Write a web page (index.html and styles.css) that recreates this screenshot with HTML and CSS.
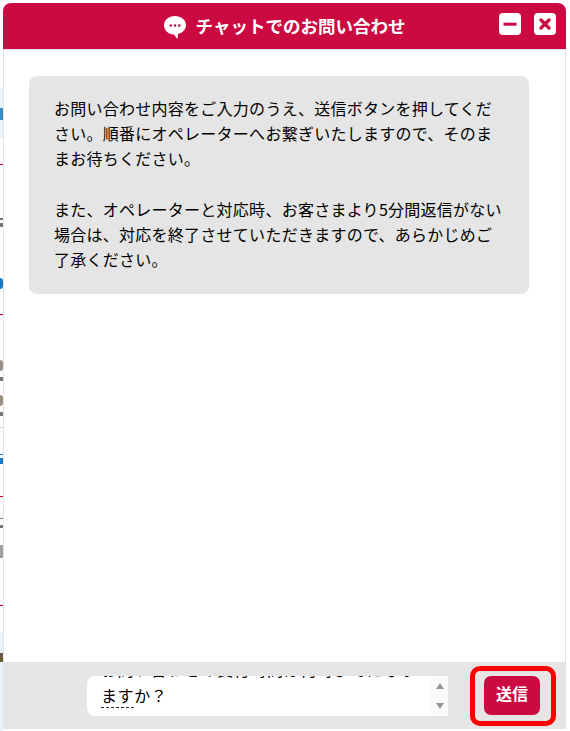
FILE: index.html
```html
<!DOCTYPE html>
<html lang="ja">
<head>
<meta charset="utf-8">
<title>チャットでのお問い合わせ</title>
<link rel="stylesheet" href="styles.css">
</head>
<body>
<div class="backdrop" aria-hidden="true">
  <div class="bg bg-band1"></div>
  <div class="bg bg-glyph1"></div>
  <div class="bg bg-red r1"></div>
  <div class="bg bg-grey g1"></div>
  <div class="bg bg-grey g2"></div>
  <div class="bg bg-blue b1"></div>
  <div class="bg bg-red r2"></div>
  <div class="bg bg-brown br1"></div>
  <div class="bg bg-grey g3"></div>
  <div class="bg bg-brown br2"></div>
  <div class="bg bg-grey g4"></div>
  <div class="bg bg-pale p1"></div>
  <div class="bg bg-blue b2"></div>
  <div class="bg bg-blue b3"></div>
  <div class="bg bg-red r3"></div>
  <div class="bg bg-grey g5"></div>
  <div class="bg bg-grey g6"></div>
  <div class="bg bg-grey g7"></div>
  <div class="bg bg-red r4"></div>
  <div class="bg bg-band2"></div>
  <div class="bg bg-grey g8"></div>
</div>
<main class="window">
  <header class="titlebar">
    <div class="title">
      <svg class="title-icon" viewBox="0 0 22 23"><path fill="#fff" d="M11 0C4.900 0 0 4 0 9.300c0 5 4.300 8.900 9.900 9.300l2.900 3.700c.4.500 1 .3 1-.3v-3.800C18.500 17 22 13.500 22 9.300 22 4 17.100 0 11 0z"/><circle cx="6.800" cy="9.500" r="1.300" fill="#cb0a42"/><circle cx="11" cy="9.500" r="1.300" fill="#cb0a42"/><circle cx="15.200" cy="9.500" r="1.300" fill="#cb0a42"/></svg>
      <h1>チャットでのお問い合わせ</h1>
    </div>
    <div class="controls">
      <button class="ctl" type="button" aria-label="最小化"><svg viewBox="0 0 22 22"><rect x="4.500" y="9.700" width="13" height="3" fill="#cb0a42"/></svg></button>
      <button class="ctl" type="button" aria-label="閉じる"><svg viewBox="0 0 22 22"><path d="M7 7l8 8M15 7l-8 8" stroke="#cb0a42" stroke-width="3.400" stroke-linecap="round"/></svg></button>
    </div>
  </header>
  <section class="messages">
    <div class="bubble">
      <p>お問い合わせ内容をご入力のうえ、送信ボタンを押してください。順番にオペレーターへお繋ぎいたしますので、そのままお待ちください。</p>
      <p>また、オペレーターと対応時、お客さまより5分間返信がない場合は、対応を終了させていただきますので、あらかじめご了承ください。</p>
    </div>
  </section>
  <footer class="composer">
    <div class="input">
      <div class="input-text">
        <div class="line">お問い合わせの受付時間は何時までになり</div>
        <div class="line"><span class="ime">ます</span>か？</div>
      </div>
      <div class="scroll"><span class="arrow up"></span><span class="arrow down"></span></div>
    </div>
    <div class="send-mark"><button class="send" type="button">送信</button></div>
  </footer>
</main>
</body>
</html>
```
FILE: styles.css
```css
* { box-sizing: border-box; }
html, body { margin: 0; height: 100%; }
body {
  position: relative;
  background: #fff;
  font-family: "Noto Sans CJK JP", "Noto Sans", sans-serif;
  color: #000;
  overflow: hidden;
}
.backdrop { position: absolute; left: 0; top: 0; width: 3px; height: 731px; overflow: hidden; }
.bg { position: absolute; left: 0; width: 3px; }
.bg-band1 { top: 88px; height: 50px; background: #e6f3fd; }
.bg-glyph1 { top: 108px; height: 12px; background: #3f8cc4; }
.bg-red { height: 1px; background: #d0021b; }
.bg-grey { background: #777; }
.bg-blue { background: #1a78c2; }
.bg-brown { background: #9a8f80; border-radius: 0 6px 6px 0; }
.bg-pale { background: #dcdcdc; }
.bg-band2 { top: 632px; height: 99px; background: #e6f3fd; }
.r1 { top: 164px; }
.r2 { top: 314px; }
.r3 { top: 496px; }
.r4 { top: 605px; }
.g1 { top: 218px; height: 2px; }
.g2 { top: 223px; height: 4px; }
.b1 { top: 278px; height: 11px; border-radius: 0 5px 5px 0; }
.br1 { top: 360px; height: 11px; }
.g3 { top: 377px; height: 4px; }
.br2 { top: 395px; height: 11px; }
.g4 { top: 412px; height: 4px; }
.p1 { top: 427px; height: 1px; }
.b2 { top: 454px; height: 1px; }
.b3 { top: 458px; height: 6px; }
.g5 { top: 518px; height: 1px; }
.g6 { top: 525px; height: 3px; }
.g7 { top: 545px; height: 13px; opacity: .7; }
.g8 { top: 653px; height: 9px; background: #6b5a3a; }
.window {
  position: absolute;
  left: 3px;
  top: 3px;
  width: 563px;
  height: 726px;
  display: flex;
  flex-direction: column;
  background: #fff;
  border-radius: 8px 8px 0 0;
}
.titlebar {
  position: relative;
  flex: 0 0 46px;
  display: flex;
  align-items: center;
  justify-content: center;
  background: #cb0a42;
  border-radius: 8px 8px 0 0;
  color: #fff;
}
.title { display: flex; align-items: center; gap: 10px; }
.title-icon { width: 22px; height: 23px; margin-top: 2px; }
h1 { margin: 0; font-size: 17.500px; font-weight: 700; line-height: 26px; }
.controls { position: absolute; right: 10px; top: 10px; display: flex; gap: 13px; }
.ctl { width: 22px; height: 22px; padding: 0; border: 0; border-radius: 4px; background: #fff; display: block; }
.ctl svg { display: block; width: 22px; height: 22px; }
.messages {
  flex: 1;
  padding: 26px 36px 0 25px;
  border-left: 1px solid #e4e4e4;
  border-right: 1px solid #e4e4e4;
  border-top: 1px solid #e4e4e4;
}
.bubble {
  width: 500px;
  padding: 20px 23px 21.600px 25px;
  background: #e5e5e5;
  border-radius: 8px;
  font-size: 16px;
  letter-spacing: .26px;
  line-height: 25.200px;
}
.bubble p { margin: 0 0 25.200px; }
.bubble p:last-child { margin: 0; }
.composer {
  flex: 0 0 67px;
  display: flex;
  align-items: flex-start;
  padding: 0 10px 0 84px;
  background: #e5e5e5;
}
.input {
  flex: none;
  width: 361px;
  height: 40px;
  margin-top: 14px;
  display: flex;
  background: #fff;
  border-radius: 8px 0 0 8px;
}
.input-text {
  flex: 1;
  height: 40px;
  padding: 0 0 8px 14px;
  overflow: hidden;
  display: flex;
  flex-direction: column;
  justify-content: flex-end;
  gap: 1px;
  font-size: 16px;
  letter-spacing: .6px;
  line-height: 25.200px;
}
.line { flex: none; height: 25.200px; white-space: nowrap; }
.ime { border-bottom: 1px dashed #222; }
.scroll {
  flex: 0 0 17px;
  display: flex;
  flex-direction: column;
  justify-content: space-between;
  align-items: center;
  padding: 7px 0;
  background: #fafafa;
}
.arrow { width: 0; height: 0; border-left: 4.500px solid transparent; border-right: 4.500px solid transparent; }
.up { border-bottom: 6px solid #959595; }
.down { border-top: 6px solid #959595; }
.send-mark {
  flex: none;
  margin: 4px 0 0 22px;
  width: 86px;
  height: 60px;
  padding: 5px 9px;
  border: 5px solid #f00;
  border-radius: 10px;
}
.send {
  display: block;
  width: 56px;
  height: 39px;
  padding: 0 0 5px;
  border: 0;
  border-radius: 7px;
  background: #cb0a42;
  color: #fff;
  font: 700 16px/30px "Noto Sans CJK JP", sans-serif;
}
```
